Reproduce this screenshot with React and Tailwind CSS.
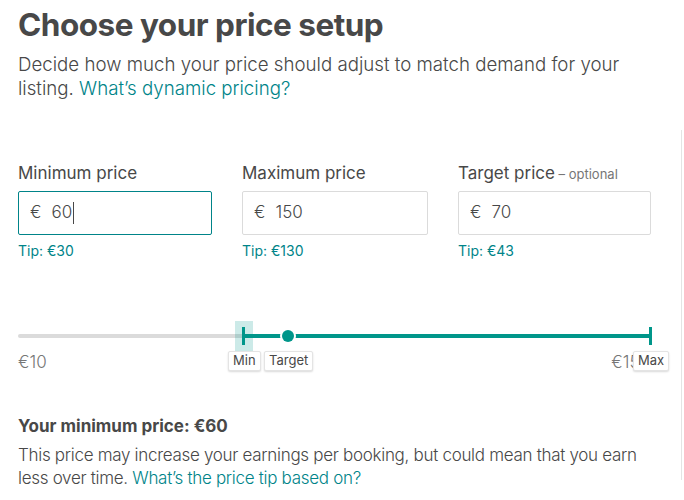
import React from 'react';

const teal = 'text-[#008489]';

const PriceField = ({ label, optional, value, tip, focused, width }) => (
  <div className={width}>
    <div className="text-[17px] text-[#484848] leading-6 h-6 whitespace-nowrap">
      {label}
      {optional && <span className="text-[13px] text-[#767676]"> – optional</span>}
    </div>
    <div
      className={`mt-[6px] h-[44px] flex items-center px-[11px] rounded-[2px] border ${
        focused ? 'border-[#008489]' : 'border-[#dbdbdb]'
      } text-[17px] text-[#484848] font-light`}
    >
      <span className="mr-[10px]">€</span>
      <span>{value}</span>
      {focused && <span className="w-px h-[22px] bg-[#484848] ml-px" />}
    </div>
    <div className={`mt-[6px] text-[14px] ${teal} leading-5`}>{tip}</div>
  </div>
);

const Tag = ({ children, className }) => (
  <div
    className={`absolute top-[17px] h-[20px] px-[4px] flex items-center bg-white border border-[#e4e4e4] rounded-[2px] shadow-[0_1px_2px_rgba(0,0,0,0.15)] text-[13px] text-[#484848] ${className}`}
  >
    {children}
  </div>
);

export default function App() {
  return (
    <div className="w-[684px] h-[500px] bg-white overflow-hidden font-['Inter',sans-serif] flex">
      <div className="flex-1 pl-[18px] pt-[5px]">
        <h1 className="text-[31.5px] font-bold text-[#484848] leading-[40px] tracking-[-0.5px]">
          Choose your price setup
        </h1>
        <p className="mt-[8px] text-[18.7px] font-light text-[#484848] leading-[24px] w-[625px]">
          Decide how much your price should adjust to match demand for your listing.{' '}
          <span className={teal}>What’s dynamic pricing?</span>
        </p>

        <div className="mt-[60px] flex gap-[30px]">
          <PriceField label="Minimum price" value="60" tip="Tip: €30" focused width="w-[194px]" />
          <PriceField label="Maximum price" value="150" tip="Tip: €130" width="w-[186px]" />
          <PriceField label="Target price" optional value="70" tip="Tip: €43" width="w-[193px]" />
        </div>

        {/* slider */}
        <div className="relative mt-[73px] w-[634px]">
          <div className="flex items-center h-[4px]">
            <div className="w-[226px] h-[4px] bg-[#dbdbdb] rounded-l-full" />
            <div className="flex-1 h-[4px] bg-[#00968a]" />
          </div>
          {/* min handle */}
          <div className="absolute left-[217px] top-[-13px] w-[18px] h-[30px] bg-[#00968a]/20" />
          <div className="absolute left-[224px] top-[-7px] w-[3px] h-[18px] bg-[#00968a]" />
          {/* target */}
          <div className="absolute left-[264px] top-[-4px] w-[12px] h-[12px] rounded-full bg-[#00968a] ring-2 ring-white" />
          {/* max */}
          <div className="absolute left-[631px] top-[-7px] w-[3px] h-[18px] bg-[#00968a]" />

          <div className="mt-[12px] flex justify-between text-[17px] font-light text-[#767676] leading-6 pr-[2px]">
            <span>€10</span>
            <span>€150</span>
          </div>
          <Tag className="left-[210px]">Min</Tag>
          <Tag className="left-[246px]">Target</Tag>
          <Tag className="left-[615px]">Max</Tag>
        </div>

        <div className="mt-[40px] text-[17px] font-bold text-[#484848] leading-6">
          Your minimum price: €60
        </div>
        <p className="mt-[6px] text-[17px] font-light text-[#484848] leading-[23px] w-[640px] tracking-[-0.3px]">
          This price may increase your earnings per booking, but could mean that you earn less over
          time. <span className={teal}>What’s the price tip based on?</span>
        </p>
      </div>
      <div className="mt-[130px] mr-[2px] h-[350px] w-px bg-[#e4e4e4]" />
    </div>
  );
}
